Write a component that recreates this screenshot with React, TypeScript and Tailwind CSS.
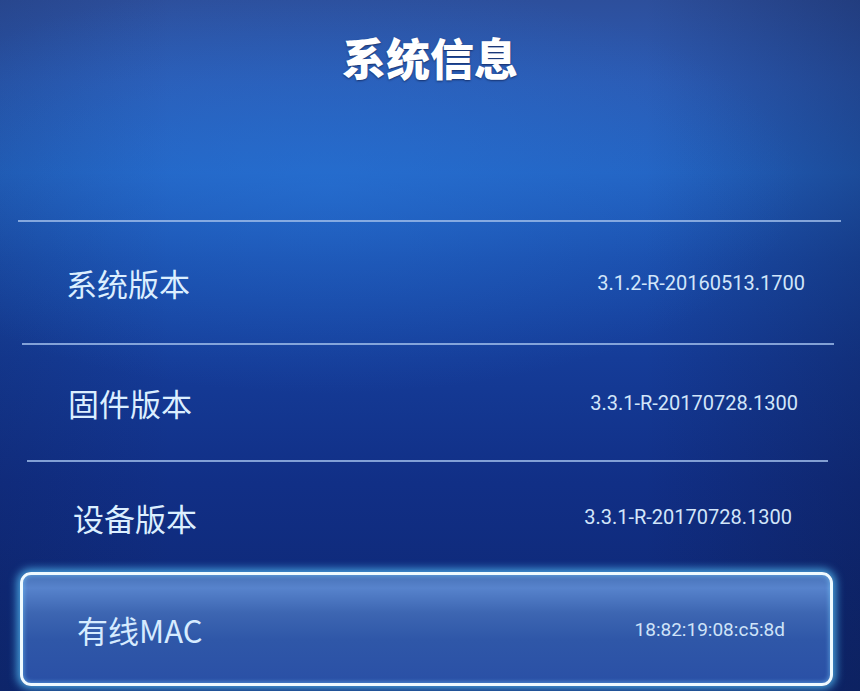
import React from "react";

const cjk = { fontFamily: '"Noto Sans CJK SC", "Noto Sans", sans-serif' };
const roboto = { fontFamily: 'Roboto, "Noto Sans", sans-serif' };

function Divider({ cls }: { cls: string }) {
  return <div className={`h-[2px] bg-[#9fbdea] opacity-80 ${cls}`} />;
}

function Row({
  label,
  value,
  cls,
}: {
  label: string;
  value: string;
  cls: string;
}) {
  return (
    <div className={`flex items-center justify-between ${cls}`}>
      <span className="text-[31px] leading-none text-[#dcefff]" style={cjk}>
        {label}
      </span>
      <span className="text-[20px] leading-none text-[#d2e6fa]" style={roboto}>
        {value}
      </span>
    </div>
  );
}

export default function App() {
  return (
    <div className="relative h-[691px] w-[860px] overflow-hidden bg-[radial-gradient(ellipse_55%_30%_at_38%_27%,rgba(40,120,220,0.45)_0%,rgba(40,120,220,0)_100%),linear-gradient(90deg,rgba(10,20,60,0.15)_0%,rgba(0,0,0,0)_20%,rgba(0,0,0,0)_75%,rgba(10,20,60,0.3)_100%),linear-gradient(180deg,#2d4f9c_0%,#2b5bb4_12%,#2363c2_25%,#1a4caa_38%,#153c98_52%,#112f86_70%,#0f2a7a_85%,#0e2872_100%)]">
      <div className="flex h-[220px] justify-center pt-[29px]">
        <h1
          className="text-[44px] font-black leading-[56px] text-white [text-shadow:0_1px_2px_rgba(0,0,30,0.5)]"
          style={cjk}
        >
          系统信息
        </h1>
      </div>
      <Divider cls="ml-[18px] mr-[19px]" />
      <Row
        label="系统版本"
        value="3.1.2-R-20160513.1700"
        cls="h-[121px] pl-[66px] pr-[55px]"
      />
      <Divider cls="ml-[22px] mr-[26px]" />
      <Row
        label="固件版本"
        value="3.3.1-R-20170728.1300"
        cls="h-[115px] pl-[68px] pr-[62px]"
      />
      <Divider cls="ml-[27px] mr-[32px]" />
      <Row
        label="设备版本"
        value="3.3.1-R-20170728.1300"
        cls="h-[110px] pl-[73px] pr-[68px]"
      />
      <div className="ml-[20px] mr-[27px] h-[114px] rounded-[11px] border-[3px] border-[#eefaff] bg-[linear-gradient(180deg,#4872b8_0%,#5783cc_12%,#3d66b2_35%,#2f57a8_60%,#2a50a6_100%)] shadow-[0_0_8px_3px_rgba(90,200,255,0.75),inset_0_0_4px_1px_rgba(120,210,255,0.5)]">
        <div className="flex h-full items-center justify-between pl-[54px] pr-[45px]">
          <span className="text-[31px] leading-none text-[#d6ebff]" style={cjk}>
            有线MAC
          </span>
          <span className="text-[19px] leading-none text-[#cfe3f8]" style={roboto}>
            18:82:19:08:c5:8d
          </span>
        </div>
      </div>
    </div>
  );
}
